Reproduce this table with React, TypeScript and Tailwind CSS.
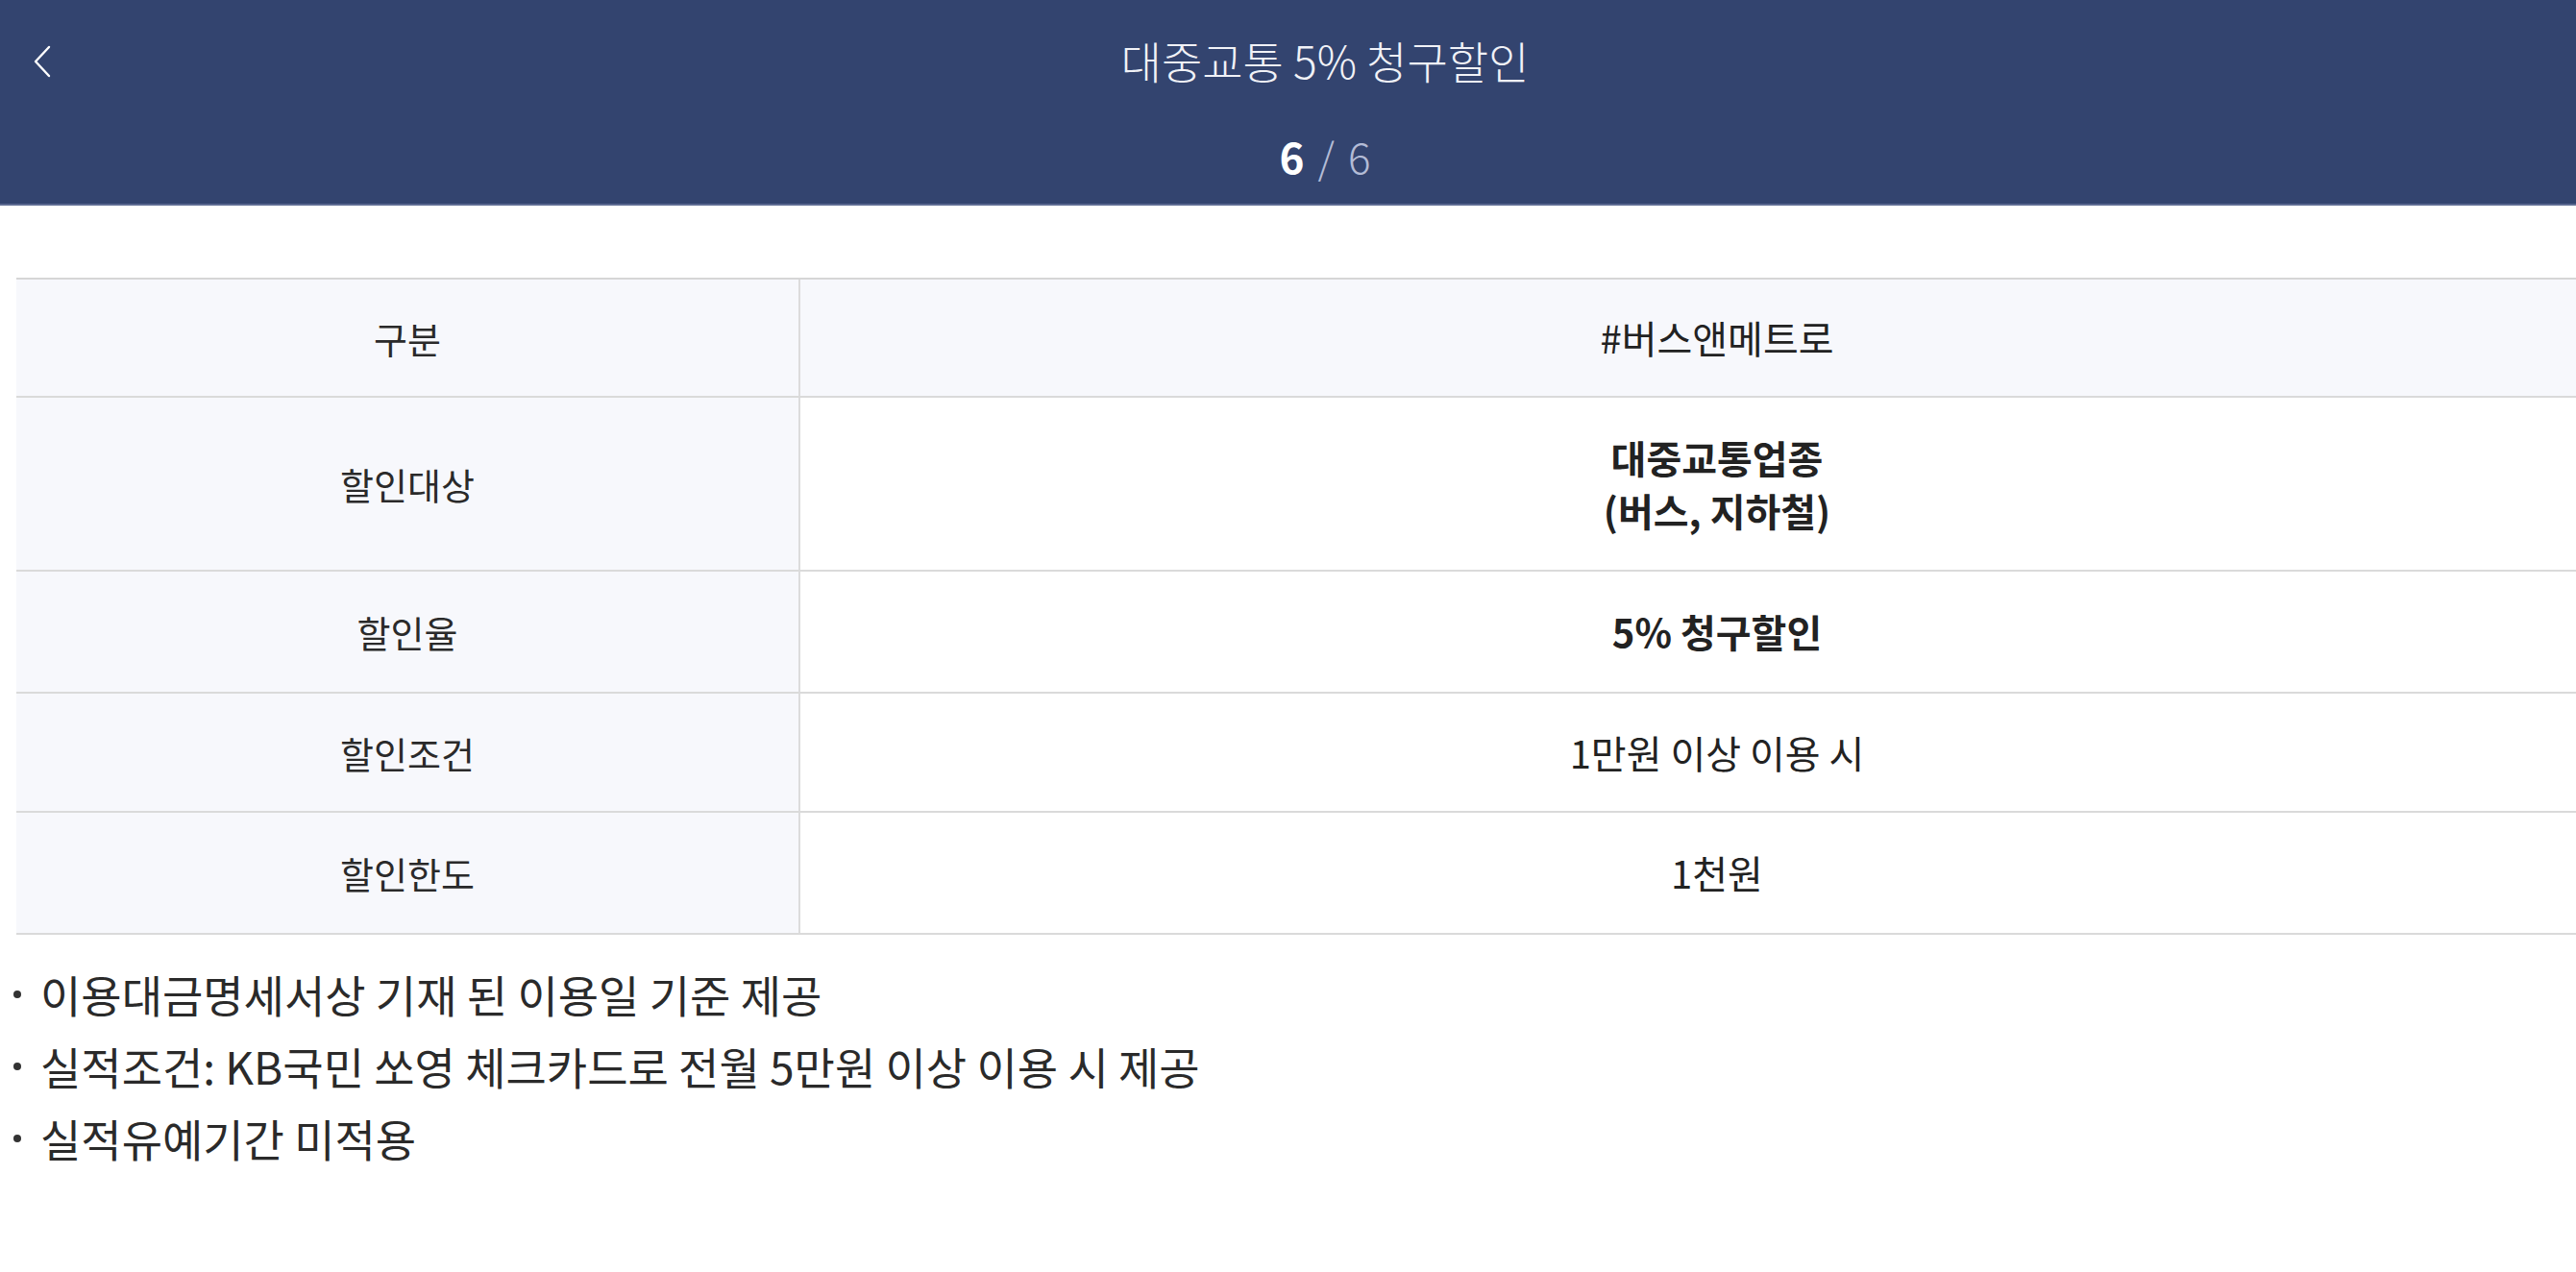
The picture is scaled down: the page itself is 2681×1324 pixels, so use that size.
import React from 'react';

// ─── Data ─────────────────────────────────────────────────────────

type Row = {
  label: string;
  value: React.ReactNode;
  bold?: boolean;
  shaded?: boolean;
  height: string;
};

const ROWS: Row[] = [
  { label: '구분', value: '#버스앤메트로', shaded: true, height: 'h-[123px]' },
  {
    label: '할인대상',
    value: (
      <>
        대중교통업종
        <br />
        (버스, 지하철)
      </>
    ),
    bold: true,
    height: 'h-[181px]',
  },
  { label: '할인율', value: '5% 청구할인', bold: true, height: 'h-[127px]' },
  { label: '할인조건', value: '1만원 이상 이용 시', height: 'h-[124px]' },
  { label: '할인한도', value: '1천원', height: 'h-[127px]' },
];

const NOTES = [
  '이용대금명세서상 기재 된 이용일 기준 제공',
  '실적조건: KB국민 쏘영 체크카드로 전월 5만원 이상 이용 시 제공',
  '실적유예기간 미적용',
];

const FONT = "font-['Noto_Sans_CJK_KR','Noto_Sans',sans-serif]";

// ─── Page ─────────────────────────────────────────────────────────

const App: React.FC = () => {
  return (
    <div className={`w-full min-h-[1324px] overflow-hidden bg-white ${FONT}`}>
      <div className="w-[2758px]">
        {/* Header */}
        <header className="relative h-[214px] bg-[#33446f] border-b-2 border-[#5d6b92]">
          <button
            className="absolute left-[30px] top-[43px] p-[4px] text-white"
            aria-label="뒤로"
          >
            <svg width="20" height="34" viewBox="0 0 20 34" fill="none">
              <path
                d="M17 2 L3 17 L17 32"
                stroke="currentColor"
                strokeWidth="2.4"
                strokeLinecap="round"
                strokeLinejoin="round"
              />
            </svg>
          </button>

          <div className="flex flex-col items-center">
            <h1 className="mt-[30px] text-[46px] leading-[64px] text-[#f1f2f7] font-light">
              대중교통 5% 청구할인
            </h1>
            <div className="mt-[38px] flex items-baseline text-[44px] leading-[60px]">
              <span className="font-bold text-white">6</span>
              <span className="mx-[14px] font-light text-[#b3bcd6]">/</span>
              <span className="font-light text-[#b3bcd6]">6</span>
            </div>
          </div>
        </header>

        {/* Benefit table */}
        <section className="mt-[75px] mx-[17px] border-t-2 border-[#d6d6d6]">
          {ROWS.map((row) => (
            <div
              key={row.label}
              className={`grid grid-cols-[816px_1fr] border-b-2 border-[#dadada] ${row.height}`}
            >
              <div className="flex items-center justify-center bg-[#f7f8fc] border-r-2 border-[#dcdcdc] text-[38px] text-[#2a2a2a]">
                {row.label}
              </div>
              <div
                className={`flex items-center justify-center text-center text-[40px] leading-[55px] text-[#222] ${
                  row.shaded ? 'bg-[#f7f8fc]' : 'bg-white'
                } ${row.bold ? 'font-bold' : 'font-normal'}`}
              >
                <span>{row.value}</span>
              </div>
            </div>
          ))}
        </section>

        {/* Notes */}
        <ul className="mt-[24px] flex flex-col">
          {NOTES.map((note) => (
            <li
              key={note}
              className="flex items-center h-[75px] pl-[14px] text-[46px] text-[#2a2a2a]"
            >
              <span className="w-[8px] h-[8px] rounded-full bg-[#333] mr-[20px] shrink-0" />
              {note}
            </li>
          ))}
        </ul>
      </div>
    </div>
  );
};

export default App;
